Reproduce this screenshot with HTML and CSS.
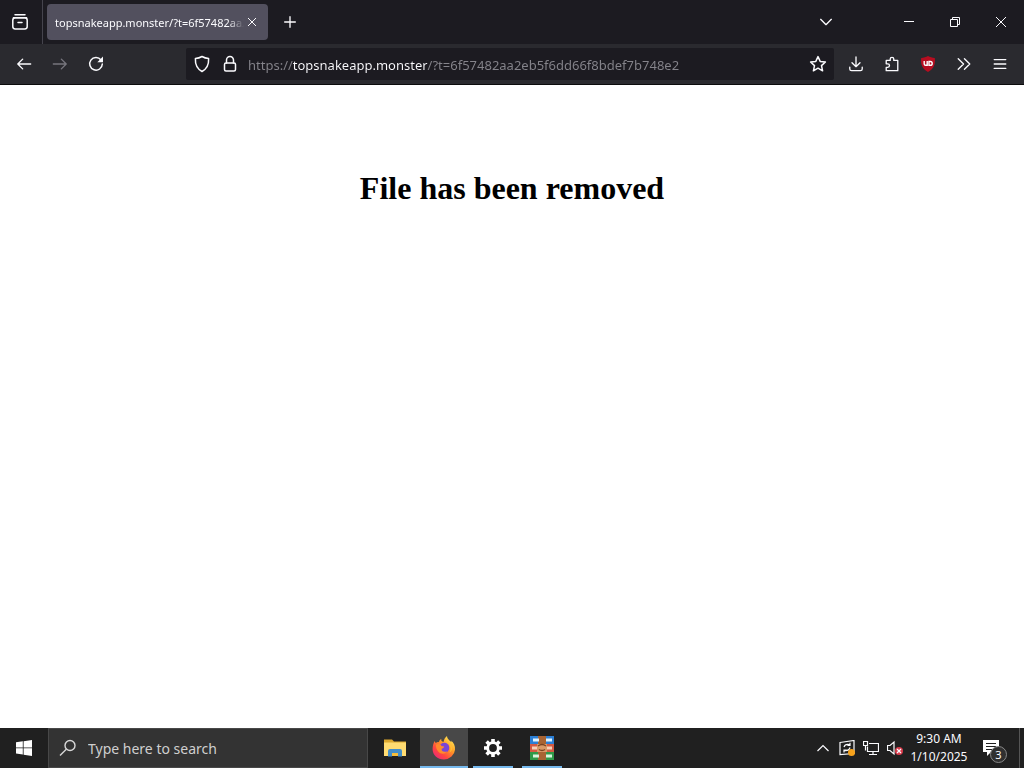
FILE: index.html
```
<!DOCTYPE html>
<html lang="en">
<head>
<meta charset="utf-8">
<meta name="viewport" content="width=device-width, initial-scale=1">
<title>topsnakeapp.monster</title>
<link rel="stylesheet" href="styles.css">
</head>
<body>
<div class="desktop">
  <header class="browser">
    <div class="titlebar">
      <button class="view-button" aria-label="Firefox View"><svg class="icon" viewBox="0 0 18 18"><path d="M4 1.8h10M2.5 4.8h13"/><rect x="1.8" y="4.8" width="14.4" height="11.2" rx="2.4"/><path d="M7 9.5h4"/></svg></button>
      <div class="tab">
        <span class="tab-title">topsnakeapp.monster/?t=6f57482aa2eb5f6dd66f8bdef7b748e2</span>
        <button class="tab-close" aria-label="Close tab"><svg class="icon-thin" viewBox="0 0 10 10"><path d="M1 1l8 8M9 1l-8 8"/></svg></button>
      </div>
      <button class="new-tab" aria-label="New tab"><svg class="icon icon-small" viewBox="0 0 18 18"><path d="M9 3v12M3 9h12"/></svg></button>
      <div class="window-controls">
        <button class="list-tabs" aria-label="List all tabs"><svg class="icon icon-small" viewBox="0 0 18 18"><path d="M3 6l6 6 6-6"/></svg></button>
        <button class="window-button" aria-label="Minimize"><svg class="icon-thin" viewBox="0 0 10 10"><path d="M0 4.5h10"/></svg></button>
        <button class="window-button" aria-label="Restore"><svg class="icon-thin" viewBox="0 0 10 10"><path d="M.5 2.5h7v7h-7zM2.5 2.5v-2h7v7h-2"/></svg></button>
        <button class="window-button" aria-label="Close"><svg class="icon-thin" viewBox="0 0 10 10"><path d="M0 0l10 10M10 0L0 10"/></svg></button>
      </div>
    </div>
    <div class="toolbar">
      <button class="tool" aria-label="Back"><svg class="icon icon-small" viewBox="0 0 18 18"><path d="M16.500 9H2M7.500 3.500L2 9l5.500 5.500"/></svg></button>
      <button class="tool tool-off" aria-label="Forward" disabled><svg class="icon icon-small" viewBox="0 0 18 18"><path d="M1.500 9H16M10.500 3.500L16 9l-5.500 5.500"/></svg></button>
      <button class="tool" aria-label="Reload"><svg class="icon" viewBox="0 0 18 18"><path d="M14 5A6.300 6.300 0 1 0 15.300 9"/><path class="fill" d="M16 1.500V7.200h-5.700z"/></svg></button>
      <form class="address">
        <button class="address-icon" type="button" aria-label="Tracking protection"><svg class="icon" viewBox="0 0 18 18"><path d="M9 1.500c2 1.200 4.300 1.900 6.600 2.100.3 5.500-1.200 9.900-6.600 12.900C3.600 13.500 2.100 9.100 2.400 3.600 4.700 3.400 7 2.700 9 1.500z"/></svg></button>
        <button class="address-icon" type="button" aria-label="Connection secure"><svg class="icon" viewBox="0 0 18 18"><rect x="3.500" y="8" width="11" height="8" rx="1.500"/><path d="M5.500 8V5a3.500 3.500 0 0 1 7 0v3"/></svg></button>
        <input class="url" type="text" aria-label="Address" spellcheck="false" value="https://topsnakeapp.monster/?t=6f57482aa2eb5f6dd66f8bdef7b748e2">
        <button class="address-icon" type="button" aria-label="Bookmark this page"><svg class="icon" viewBox="0 0 18 18"><path d="M9 1.600l2.200 4.800 5.200.6-3.900 3.600 1.100 5.200L9 13.200l-4.600 2.600 1.100-5.200L1.600 7l5.200-.6z"/></svg></button>
      </form>
      <button class="tool" aria-label="Downloads"><svg class="icon icon-small" viewBox="0 0 18 18"><path d="M9 1v10.700M4.500 7.500L9 12l4.500-4.500M2 12.500v2a2 2 0 0 0 2 2h10a2 2 0 0 0 2-2v-2"/></svg></button>
      <button class="tool" aria-label="Extensions"><svg class="icon icon-small" viewBox="0 0 18 18"><path d="M2.500 5H7V3.500a2 2 0 0 1 4 0V5h4.500v11.500h-13v-3.700h1.700a2 2 0 0 0 0-4H2.500z"/></svg></button>
      <button class="tool" aria-label="uBlock Origin"><svg class="icon-shield" viewBox="0 0 18 18"><path fill="#b50d20" d="M9 1c2 1.200 4.300 1.800 6.800 2 .9 6.500-1.300 11-6.800 14C3.500 14 1.300 9.500 2.200 3 4.700 2.800 7 2.200 9 1z"/><path fill="none" stroke="#fff" stroke-width="1.400" d="M5.200 6v3q0 1.300 1.500 1.300h1.500V6M10 6.500h1.300a1.900 1.900 0 0 1 0 3.800H10z"/></svg></button>
      <button class="tool" aria-label="More tools"><svg class="icon icon-small" viewBox="0 0 18 18"><path d="M2.500 3l6 6-6 6M9.500 3l6 6-6 6"/></svg></button>
      <button class="tool" aria-label="Application menu"><svg class="icon icon-small" viewBox="0 0 18 18"><path d="M2.500 4h13M2.500 9h13M2.500 14h13"/></svg></button>
    </div>
  </header>

  <main class="page"><h1 class="message">File has been removed</h1></main>

  <footer class="taskbar">
    <button class="start" aria-label="Start"><svg class="icon-start" viewBox="0 0 16 16"><path d="M0 2.300l6.800-1v6.200H0zM7.600 1.200L16 0v7.500H7.600zM0 8.300h6.800v6.300l-6.800-1zM7.600 8.300H16V16l-8.400-1.300z"/></svg></button>
    <label class="search">
      <svg class="icon-search" viewBox="0 0 18 18"><circle cx="11" cy="6.500" r="5"/><path d="M7.300 10.200L1 16.500"/></svg>
      <input class="search-input" type="text" placeholder="Type here to search" aria-label="Type here to search">
    </label>
    <nav class="apps">
      <button class="app" aria-label="File Explorer"><svg class="app-icon" viewBox="0 0 24 24"><path fill="#dca82f" d="M1 3.500h8l2 2h12V20H1z"/><path fill="#ffdc72" d="M1 6.500h22V20H1z"/><path fill="#438ec9" d="M5 20.500V15q0-2 2-2h10q2 0 2 2v5.500h-4V17H9v3.500z"/><path fill="#f7bd39" d="M9 17h6v3H9z"/></svg></button>
      <button class="app app-open app-active" aria-label="Firefox"><svg class="app-icon" viewBox="0 0 24 24">
        <defs><linearGradient id="flame" x1="1" y1="0" x2="0.200" y2="1"><stop offset="0.100" stop-color="#fff05a"/><stop offset="0.450" stop-color="#ff9a25"/><stop offset="0.750" stop-color="#ff4640"/><stop offset="1" stop-color="#e92879"/></linearGradient></defs>
        <path fill="url(#flame)" d="M2.600 5c.3 1 .7 1.500 1.300 2 .8-.8 2-1.100 3.100-.8C7.200 4.600 8 3.500 9.300 3c-.3 1.700.5 2.600 2.200 3 .5-2.500 1.500-4.600 3.500-6 .1 3.200 2.600 4.300 4.500 6.200-.1-.7-.3-1.200-.6-1.700 2.900 2.200 4.500 5.500 4.100 9.300A11.500 10.500 0 0 1 12 23.500C5.400 23.500.6 18.800.6 13.200c0-3.200.8-5.800 2-8.200z"/>
        <circle cx="12.300" cy="11.700" r="5" fill="#7a45d5"/>
        <path fill="#ff8a2c" d="M4 8.500c2.600-1.300 4.900-.2 5.500 1.500l2.700.4c-.4 1.400-1.400 1.800-2.500 2.300-.5 2.500 2.200 3.900 5.500 2.500-1.800 3.100-6.300 3.400-9 .3C4.300 13.300 3.800 11 4 8.500z"/>
        <path fill="#ffbd35" d="M15.500 6.700c3.200 2.600 4.300 6.600 1.700 10 4.300-2.200 4.600-8-1.700-10z"/>
      </svg></button>
      <button class="app app-open" aria-label="Settings"><svg class="app-icon" viewBox="0 0 24 24"><circle cx="12" cy="12" r="5.300" fill="none" stroke="#fff" stroke-width="2.800"/><path stroke="#fff" stroke-width="3.600" d="M12 3v3M12 18v3M3 12h3M18 12h3M5.600 5.600l2.200 2.200M16.200 16.200l2.200 2.200M18.400 5.600l-2.200 2.200M7.800 16.200l-2.200 2.200"/></svg></button>
      <button class="app app-open" aria-label="WinRAR"><svg class="app-icon" viewBox="0 0 24 24"><path fill="#2b7fd5" d="M0 0h24v8H0z"/><path fill="#d45a42" d="M0 8h24v8H0z"/><path fill="#2f9a48" d="M0 16h24v8H0z"/><path fill="#a86434" d="M8 0h8v24H8z"/><path fill="#d99a68" d="M7 8h10v8H7z"/><path fill="#dff3ff" d="M3 2.500h6v3H3zM16 2.500h6v3h-6z"/><path fill="#d9f5dd" d="M3 18.500h6v3H3zM16 18.500h6v3h-6z"/><path fill="#f6d1b8" d="M2 10.500h5v3H2zM17 10.500h5v3h-5z"/><path fill="none" stroke="#7b421f" stroke-width="1.500" d="M8 10q4-3 8 0M9 13.500q3 2 6 0"/></svg></button>
    </nav>
    <div class="tray">
      <button class="tray-button" aria-label="Show hidden icons"><svg class="icon-tray" viewBox="0 0 16 16"><path d="M2.500 11L8 5.500l5.500 5.500"/></svg></button>
      <button class="tray-button" aria-label="Update status"><svg class="icon-tray" viewBox="0 0 16 16"><path d="M1 2.500l14-2v13L1 14.500z"/><path d="M5 7q1-3.500 5.500-2.500M11 2.800v2.500H8.500M11 7.500q-1 3.500-5.500 3M5 12.500V10h2.500"/><circle cx="12.500" cy="12.500" r="3.500" fill="#f7a21b" stroke="none"/></svg></button>
      <button class="tray-button" aria-label="Network"><svg class="icon-tray" viewBox="0 0 16 16"><path d="M6 3.500h9.500v8H4.500v-5M.5 1.500h4v4h-4zM2.500 5.500v5M10 11.500v3M6 14.500h8"/></svg></button>
      <button class="tray-button" aria-label="Volume muted"><svg class="icon-tray" viewBox="0 0 16 16"><path d="M.5 5.500H3l4-3.500v12l-4-3.500H.5z"/><circle cx="12" cy="11" r="4" fill="#d83b4b" stroke="none"/><path d="M10 9l4 4M14 9l-4 4"/></svg></button>
      <button class="clock"><time>9:30 AM</time><time>1/10/2025</time></button>
      <button class="notifications" aria-label="Notifications, 3 new"><svg class="icon-note" viewBox="0 0 18 18"><path fill="#fff" d="M1 1h16v12H9l-4 4v-4H1z"/><path stroke="#202020" d="M4 4.500h10M4 7.500h10M4 10.500h6"/></svg><span class="badge">3</span></button>
      <button class="show-desktop" aria-label="Show desktop"></button>
    </div>
  </footer>
</div>
</body>
</html>
```
FILE: styles.css
```
* { box-sizing: border-box; }

body {
  margin: 0;
  font-family: "Noto Sans", "Open Sans", sans-serif;
}

button {
  display: flex;
  align-items: center;
  justify-content: center;
  flex-shrink: 0;
  margin: 0;
  padding: 0;
  border: 0;
  background: none;
  color: #fbfbfe;
  font: inherit;
}

input {
  min-width: 0;
  padding: 0;
  border: 0;
  outline: 0;
  background: none;
  font: inherit;
}

svg { display: block; flex-shrink: 0; }

.desktop { display: flex; flex-direction: column; min-height: 100vh; }

.icon, .icon-thin, .icon-tray, .icon-search { fill: none; stroke: currentColor; }
.icon { width: 18px; height: 18px; stroke-width: 1.5; stroke-linejoin: round; stroke-linecap: round; }
.icon-small { width: 16px; height: 16px; }
.icon .fill { fill: currentColor; stroke: none; }
.icon-thin { width: 10px; height: 10px; stroke-width: 1; }
.icon-shield { width: 18px; height: 18px; }
.icon-tray { width: 16px; height: 16px; stroke-width: 1.2; }
.icon-search { width: 18px; height: 18px; stroke-width: 1.4; color: #d8d8d8; }
.icon-start { width: 16px; height: 16px; fill: #fff; }
.icon-note { width: 18px; height: 18px; }

.browser { border-bottom: 1px solid #0c0c0d; background: #2a2a2f; }

.titlebar { display: flex; align-items: stretch; height: 44px; background: #1c1b21; }
.view-button { width: 43px; padding-right: 3px; border-right: 1px solid #45444d; }
.tab {
  display: flex;
  align-items: center;
  width: 221px;
  margin: 4px;
  padding: 0 8px;
  border-radius: 4px;
  background: #52505e;
  color: #fbfbfe;
}
.tab-title {
  flex: 1;
  overflow: hidden;
  padding-top: 2px;
  font-size: 11px;
  line-height: 16px;
  white-space: nowrap;
  mask-image: linear-gradient(to left, transparent, #000 16px);
}
.tab-close { width: 16px; height: 24px; }
.new-tab { width: 36px; }
.window-controls { display: flex; margin-left: auto; }
.list-tabs { width: 36px; margin-right: 42px; }
.window-button { width: 46px; }

.toolbar { display: flex; align-items: center; height: 40px; padding: 0 6px; }
.tool { width: 36px; height: 32px; }
.tool-off { color: #77767e; }
.address {
  display: flex;
  flex: 1;
  align-items: center;
  min-width: 0;
  height: 32px;
  margin: 0 4px 0 72px;
  padding: 0 2px;
  border-radius: 2px;
  background: #1c1b21;
}
.address-icon { width: 28px; height: 28px; }
.url {
  flex: 1;
  height: 24px;
  margin-left: 4px;
  padding-top: 2px;
  background: linear-gradient(to right, #85848b 45px, #fbfbfe 45px, #fbfbfe 179px, #85848b 179px);
  background-clip: text;
  color: transparent;
  caret-color: #fbfbfe;
  font-size: 13px;
}

.page { flex: 1; padding: 85px 16px; background: #fff; }
.message {
  margin: 0;
  color: #000;
  font: bold 32px/37px "Liberation Serif", serif;
  text-align: center;
}

.taskbar { display: flex; height: 40px; background: #202020; color: #fff; }
.start { width: 48px; }
.search {
  display: flex;
  align-items: center;
  gap: 11px;
  width: 320px;
  padding: 0 10px;
  border: 1px solid #484848;
  background: #333;
}
.search-input { flex: 1; font-size: 14px; }
.search-input::placeholder { color: #cfcfcf; opacity: 1; }
.apps { display: flex; gap: 1px; padding-left: 3px; }
.app { position: relative; width: 48px; }
.app-active { background: #484848; }
.app-icon { width: 24px; height: 24px; }
.app-open::after {
  content: "";
  position: absolute;
  right: 4px;
  bottom: 0;
  left: 4px;
  height: 2px;
  background: #76b9ed;
}
.app-active::after { right: 0; left: 0; }

.tray { display: flex; margin-left: auto; }
.tray-button { width: 24px; }
.clock { flex-direction: column; width: 64px; font-size: 12px; line-height: 18px; }
.notifications { position: relative; width: 48px; padding-right: 8px; }
.badge {
  position: absolute;
  top: 18px;
  left: 19px;
  width: 17px;
  height: 17px;
  border: 1px solid #888;
  border-radius: 50%;
  background: #303030;
  font-size: 11px;
  line-height: 15px;
}
.show-desktop { width: 5px; border-left: 1px solid #555; }
```
